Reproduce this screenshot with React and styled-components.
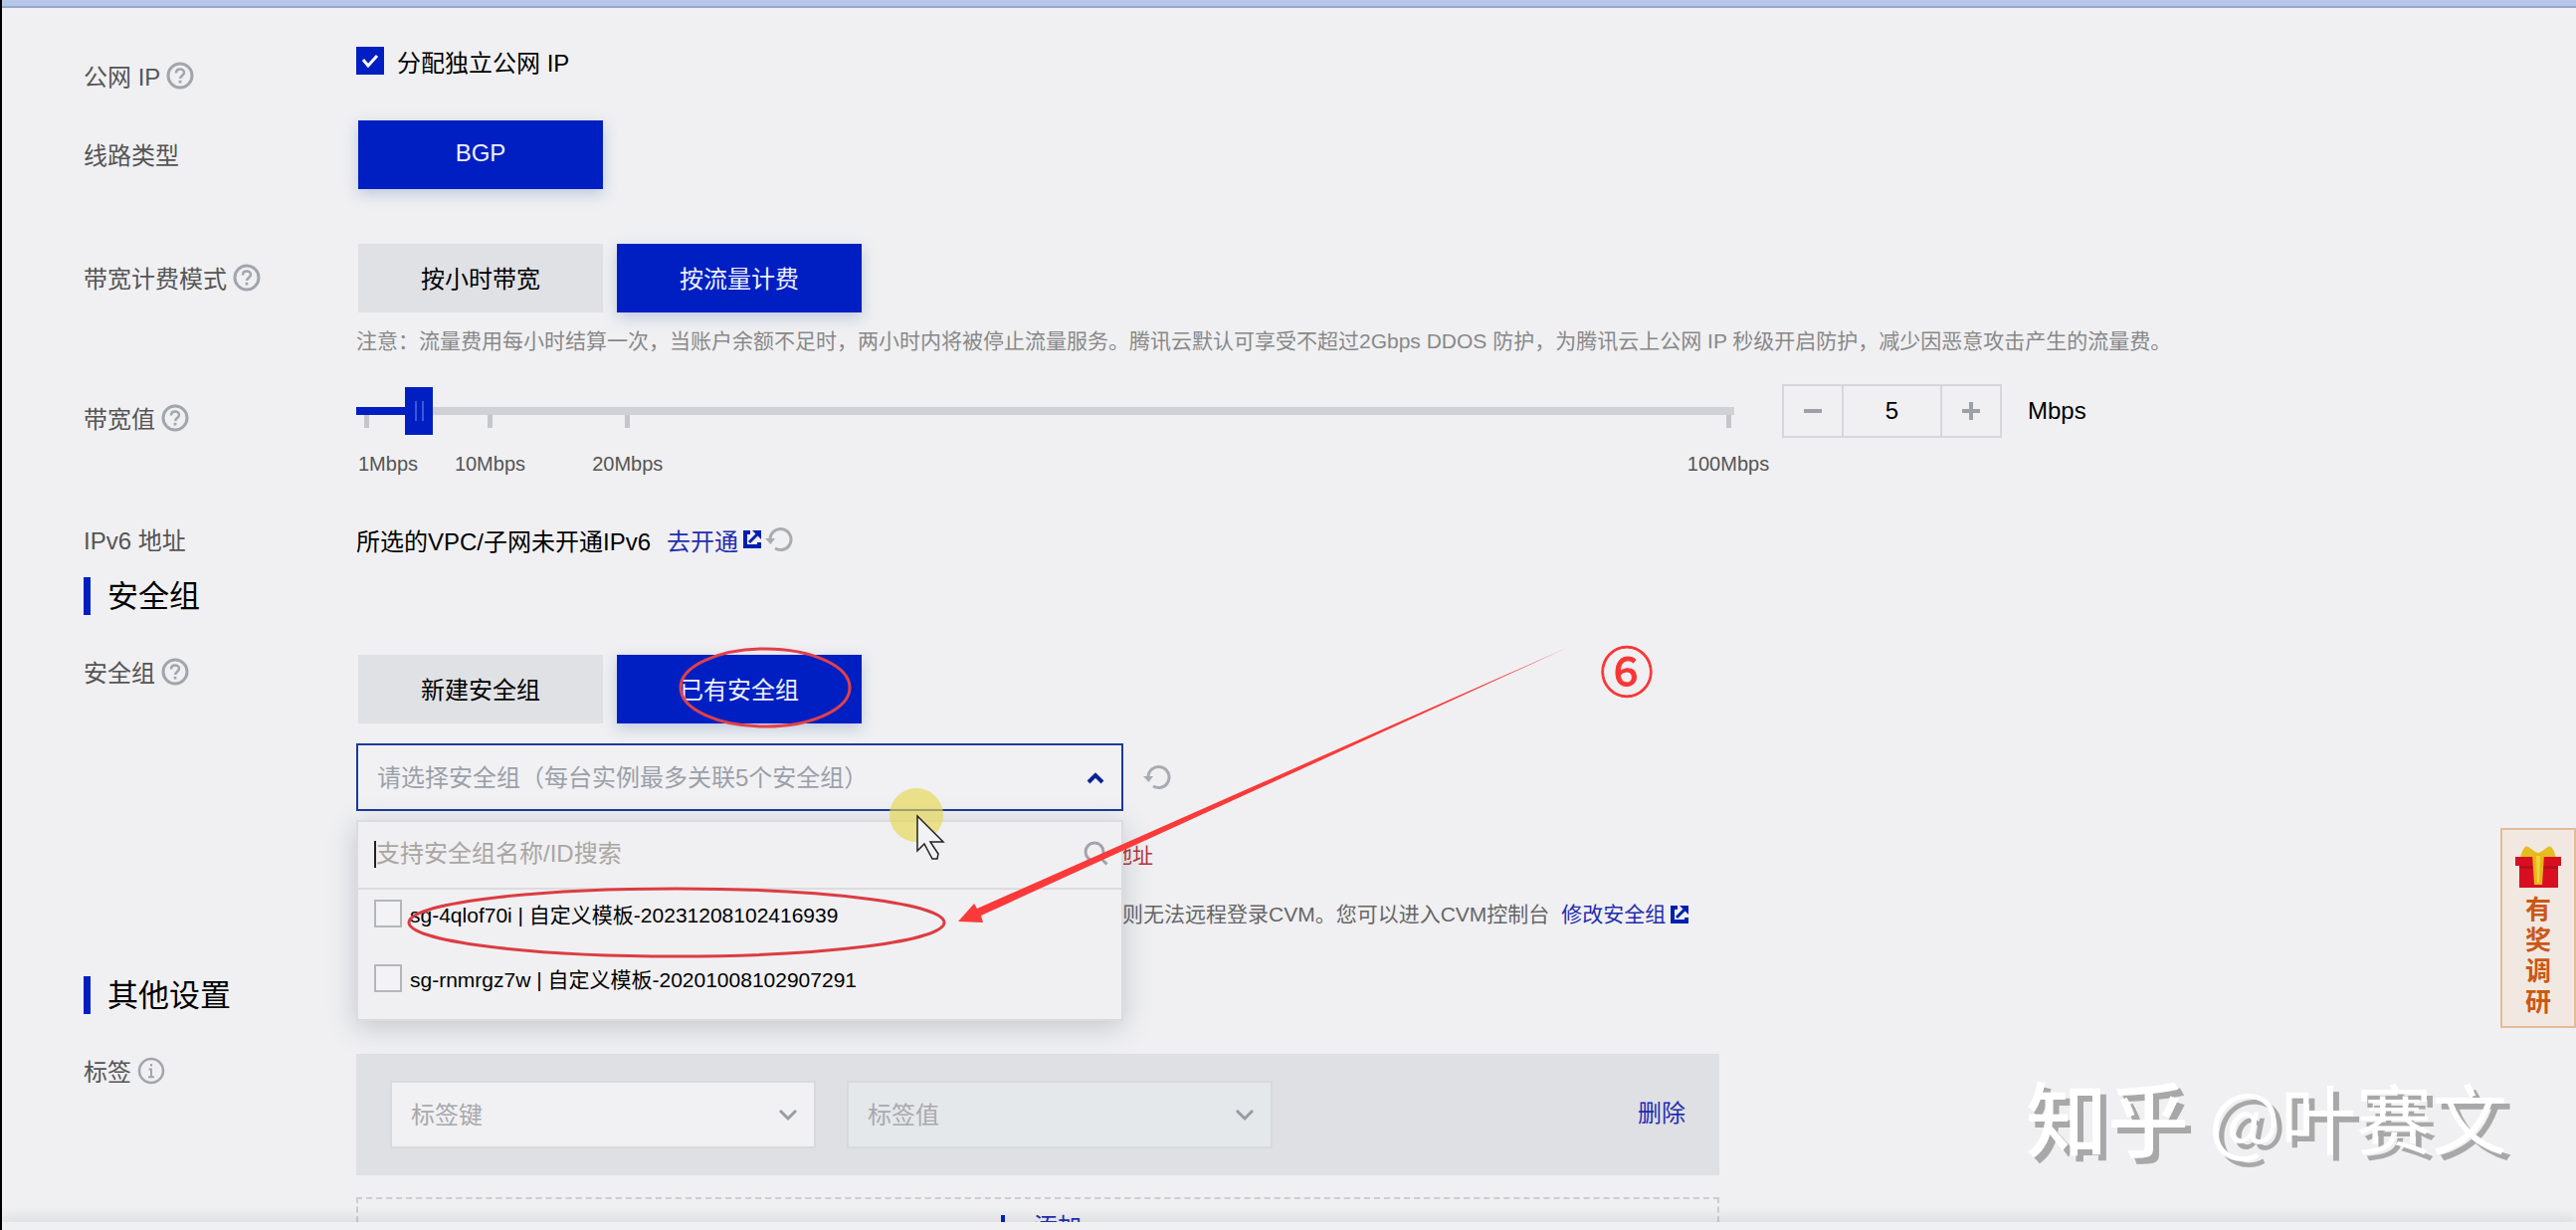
import React from "react";
import styled, { createGlobalStyle, css } from "styled-components";

const GlobalStyle = createGlobalStyle`
    * {
        box-sizing: border-box;
    }
    body {
        margin: 0;
        background-color: #f0f0f2;
        color: #000;
        font-family: "Liberation Sans", "Noto Sans CJK SC", sans-serif;
        font-size: 24px;
    }
    button, input, select {
        font: inherit;
        margin: 0;
    }
`;

const BLUE = "#001fc2";
const LINK = "#1f2db0";

const Page = styled.div`
    position: relative;
    display: flex;
    flex-direction: column;
    height: 100vh;
    overflow: hidden;
    border-left: 2px solid #000;
`;

const TopBar = styled.header`
    flex: none;
    height: 8px;
    background-color: #b5c6e6;
    border-bottom: 2px solid #98a6cf;
`;

const Content = styled.main`
    flex: 1;
    min-height: 0;
    overflow: hidden;
    padding: 34px 82px 0;
`;

const BottomBar = styled.footer`
    flex: none;
    z-index: 1;
    height: 8px;
    background-color: #f0f0f2;
    box-shadow: 0 -2px 14px rgba(60, 70, 80, 0.2);
`;

const Row = styled.div`
    display: grid;
    grid-template-columns: 274px minmax(0, 1fr);
    align-items: start;
    margin-top: ${props => props.gap || 0}px;
`;

const Label = styled.div`
    display: flex;
    align-items: center;
    gap: 6px;
    height: ${props => (props.compact ? 36 : 70)}px;
    padding-bottom: 3px;
    color: #555;
`;

const Field = styled.div`
    min-width: 0;
`;

const SectionTitle = styled.h2`
    display: flex;
    align-items: center;
    height: 38px;
    margin: ${props => props.gap}px 0 0;
    padding: 0 0 5px 17px;
    border-left: 7px solid ${BLUE};
    font-size: 31px;
    font-weight: 400;
`;

const CheckLabel = styled.label`
    display: flex;
    align-items: center;
    gap: 13px;
    height: 40px;
    padding-bottom: 2px;
`;

const Checkbox = styled.input`
    appearance: none;
    flex: none;
    width: 28px;
    height: 28px;
    border: 2px solid #b4b6ba;
    background-color: #f3f3f5;
    &:checked {
        border-color: ${BLUE};
        background: ${BLUE} url("data:image/svg+xml,%3Csvg xmlns='http://www.w3.org/2000/svg' viewBox='0 0 24 24'%3E%3Cpath d='M5 11l5 6 9-10' fill='none' stroke='white' stroke-width='3'/%3E%3C/svg%3E") center / 24px no-repeat;
    }
`;

const Choices = styled.div`
    display: flex;
    gap: 14px;
    padding-left: 2px;
`;

const Choice = styled.button`
    width: 246px;
    height: 69px;
    padding: 0 0 3px;
    border: 0;
    background-color: #e0e1e5;
    color: #000;
    ${props => props.$active && css`
        background-color: ${BLUE};
        color: #eef1ff;
        box-shadow: 0 5px 14px rgba(70, 110, 170, 0.3);
    `}
`;

const Note = styled.p`
    margin: 14px 0 0;
    font-size: 21px;
    line-height: 30px;
    color: #888;
    white-space: nowrap;
`;

const Bandwidth = styled.div`
    display: flex;
    align-items: flex-start;
`;

const Slider = styled.div`
    display: grid;
    flex: 0 1 1385px;
    height: 95px;
    & > * {
        grid-area: 1 / 1;
    }
`;

const Track = styled.div`
    height: 8px;
    margin-top: 23px;
    background: linear-gradient(to right, ${BLUE} 55px, #cfd1d6 55px);
`;

const Range = styled.input`
    appearance: none;
    z-index: 1;
    width: calc(100% + 12px);
    height: 48px;
    margin: 3px -6px 0;
    background: transparent;
    &::-webkit-slider-thumb {
        appearance: none;
        width: 28px;
        height: 48px;
        background:
            linear-gradient(#3a57dc, #3a57dc) 10px 14px / 2px 20px no-repeat,
            linear-gradient(#3a57dc, #3a57dc) 17px 14px / 2px 20px no-repeat,
            ${BLUE};
    }
`;

const Marks = styled.div`
    display: grid;
    grid-template-columns: 9fr 10fr 80fr 0;
    margin-top: 31px;
    padding: 0 6px 0 10px;
`;

const Mark = styled.div`
    display: flex;
    flex-direction: column;
    align-items: center;
    gap: 21px;
    width: 0;
    font-size: 20px;
    line-height: 30px;
    color: #555;
    white-space: nowrap;
    &::before {
        content: "";
        width: 5px;
        height: 13px;
        background-color: #c4c6cc;
    }
    &:first-child {
        align-items: flex-start;
        margin-left: -8px;
    }
    &:first-child::before {
        margin-left: 6px;
    }
`;

const Stepper = styled.div`
    display: flex;
    flex: none;
    margin: 0 26px 0 48px;
    border: 2px solid #d6d7da;
    height: 54px;
`;

const StepButton = styled.button`
    display: flex;
    align-items: center;
    justify-content: center;
    width: 58px;
    padding: 0;
    border: 0;
    background: none;
`;

const StepInput = styled.input`
    width: 101px;
    padding: 0;
    border: solid #d6d7da;
    border-width: 0 2px;
    background: none;
    text-align: center;
`;

const Unit = styled.span`
    line-height: 54px;
`;

const Inline = styled.div`
    display: flex;
    align-items: center;
    gap: ${props => props.gap || 0}px;
    min-height: ${props => props.minHeight || 0}px;
`;

const Link = styled.a`
    display: inline-flex;
    align-items: center;
    gap: 5px;
    margin-left: 12px;
    color: ${LINK};
    text-decoration: none;
`;

const IconButton = styled.button`
    display: flex;
    padding: 0;
    border: 0;
    background: none;
`;

const Picker = styled.div`
    position: relative;
    width: 771px;
`;

// native select with its own arrow laid over the right end
const SelectBox = styled.div`
    display: grid;
    width: ${props => props.width}px;
    align-items: center;
    & > * {
        grid-area: 1 / 1;
    }
    & > svg {
        justify-self: end;
        margin-right: 18px;
        pointer-events: none;
    }
`;

const Select = styled.select`
    appearance: none;
    width: 100%;
    height: 68px;
    padding: 0 19px;
    border: 2px solid ${props => (props.$open ? "#1b3a9c" : "#d8d9dc")};
    border-radius: 0;
    background-color: ${props => (props.disabled ? "#e4e8eb" : "#f1f1f3")};
    color: ${props => (props.$open ? "#9ba0aa" : "#a9a9ad")};
    opacity: 1;
`;

const Dropdown = styled.div`
    position: absolute;
    z-index: 2;
    top: 77px;
    left: 0;
    width: 100%;
    height: 202px;
    border: 2px solid #dcdcdf;
    background-color: #f0f0f2;
    box-shadow: 0 6px 26px rgba(60, 75, 90, 0.25);
`;

const SearchBar = styled.div`
    display: flex;
    align-items: center;
    height: 68px;
    padding: 0 12px 2px 16px;
    border-bottom: 2px solid #dcdcdf;
`;

const Caret = styled.span`
    width: 2px;
    height: 27px;
    background-color: #222;
`;

const SearchInput = styled.input`
    flex: 1;
    min-width: 0;
    padding: 0;
    border: 0;
    outline: 0;
    background: none;
    &::placeholder {
        color: #aaa6a3;
    }
`;

const Option = styled.label`
    display: flex;
    align-items: center;
    gap: 8px;
    height: 65px;
    padding: 0 0 18px 16px;
    font-size: 21px;
`;

const Help = styled.p`
    display: flex;
    align-items: center;
    margin: ${props => props.gap}px 0 0;
    padding-left: ${props => props.indent}px;
    font-size: 21px;
    line-height: 30px;
    color: ${props => (props.error ? "#b8323a" : "#666")};
    white-space: nowrap;
`;

const TagPanel = styled.div`
    display: flex;
    align-items: center;
    gap: 31px;
    max-width: 1370px;
    height: 122px;
    padding: 0 34px;
    background-color: #dfe0e4;
`;

const TextButton = styled.button`
    margin-left: auto;
    padding: 0 0 8px;
    border: 0;
    background: none;
    color: ${LINK};
`;

const AddButton = styled.button`
    display: flex;
    align-items: center;
    justify-content: center;
    gap: 22px;
    width: 100%;
    max-width: 1370px;
    height: 54px;
    margin-top: 22px;
    padding: 0;
    border: 2px dashed #cccdd1;
    background: none;
    color: ${LINK};
`;

const Survey = styled.a`
    position: absolute;
    z-index: 2;
    top: 832px;
    right: 0;
    display: flex;
    flex-direction: column;
    align-items: center;
    width: 76px;
    height: 201px;
    padding-top: 15px;
    border: 2px solid #e3bd97;
    background-color: #f1e8e2;
    color: #cb5716;
    font-size: 26px;
    font-weight: 700;
    line-height: 31px;
    text-decoration: none;
`;

const SurveyText = styled.span`
    width: 26px;
    margin-top: 6px;
    word-break: break-all;
`;

const Watermark = styled.div`
    position: absolute;
    z-index: 2;
    right: 69px;
    bottom: 60px;
    display: flex;
    gap: 20px;
    color: #fff;
    font-family: "Noto Sans CJK SC", sans-serif;
    font-size: 76px;
    line-height: 110px;
    text-shadow: 6px 6px 0 #a8a8a8;
`;

const WatermarkBrand = styled.span`
    font-size: 82px;
    font-weight: 500;
`;

const Annotations = styled.svg`
    position: absolute;
    z-index: 3;
    top: 0;
    left: -2px;
    pointer-events: none;
`;

const StepNumber = styled.span`
    position: absolute;
    z-index: 3;
    top: 643px;
    left: 1606px;
    color: #fa3535;
    font-family: "Noto Sans CJK SC", sans-serif;
    font-size: 54px;
    line-height: 60px;
    -webkit-text-stroke: 1px #fa3535;
`;

const HelpIcon = () => (
    <svg width="28" height="28" viewBox="0 0 28 28" fill="none" stroke="#a2a5ad" strokeWidth="3">
        <circle cx="14" cy="14" r="12" />
        <path d="M10 11.5c0-2.6 1.8-4 4-4s4 1.500 4 3.600c0 2.800-3.900 3-3.900 6" strokeWidth="2.500" />
        <path d="M14 18.800v2.700" strokeWidth="2.800" />
    </svg>
);

const InfoIcon = () => (
    <svg width="28" height="28" viewBox="0 0 28 28" fill="none" stroke="#a2a5ad" strokeWidth="2.500">
        <circle cx="14" cy="14" r="12" />
        <path d="M14 7v2.600M11.500 12.500H14V20M11 20.300h6" strokeWidth="2" />
    </svg>
);

const RefreshIcon = () => (
    <svg width="28" height="26" viewBox="0 0 28 26" fill="none">
        <path d="M5 13a10.500 10.500 0 1 1 5 9" stroke="#a9abb2" strokeWidth="3" />
        <path d="M0 12h10l-4.500 6z" fill="#a9abb2" />
    </svg>
);

const ExternalIcon = () => (
    <svg width="18" height="18" viewBox="0 0 18 18" fill="none" stroke="#001fb0" strokeWidth="4">
        <path d="M7 2H2v14h14v-4" />
        <path d="M6 12l8-8" strokeWidth="3" />
        <path d="M9 0h9v9z" fill="#001fb0" stroke="none" />
    </svg>
);

const Chevron = ({ up }) => (
    <svg width="20" height="14" viewBox="0 0 20 14" fill="none" stroke={up ? "#0b2499" : "#989ba2"} strokeWidth={up ? "4" : "3"}>
        <path d={up ? "M3 12l7-7 7 7" : "M2 3l8 8 8-8"} />
    </svg>
);

const SearchIcon = () => (
    <svg width="26" height="26" viewBox="0 0 26 26" fill="none" stroke="#a2a3ae" strokeWidth="3">
        <circle cx="11" cy="11" r="9" />
        <path d="M17.500 17.500l6 6" />
    </svg>
);

const SignIcon = ({ plus, color = "#9da0a8" }) => (
    <svg width="18" height="18" viewBox="0 0 18 18" stroke={color} strokeWidth="4">
        <path d={plus ? "M0 9h18M9 0v18" : "M0 9h18"} />
    </svg>
);

const GiftIcon = () => (
    <svg width="46" height="44" viewBox="0 0 46 44">
        <path d="M5 13C7 5 10 0 13 2c4 2 6 5 10 6 4-1 6-4 10-6 3-2 6 3 8 11z" fill="#e5bd20" />
        <path d="M0 12h46v9h-3v22H4V21H0z" fill="#d80f20" />
        <path d="M4 21h39v3H4z" fill="#b90d1e" />
        <path d="M17 9h12l-2 31h-8z" fill="#e9b51c" />
        <path d="M21 11h4l-1 27h-2z" fill="#f0d53b" />
    </svg>
);

const securityGroups = [
    "sg-4qlof70i | 自定义模板-20231208102416939",
    "sg-rnmrgz7w | 自定义模板-20201008102907291"
];

const App = () => (
    <>
        <GlobalStyle />
        <Page>
            <TopBar />
            <Content>
                <Row>
                    <Label>公网 IP <HelpIcon /></Label>
                    <Field>
                        <CheckLabel>
                            <Checkbox type="checkbox" defaultChecked />
                            分配独立公网 IP
                        </CheckLabel>
                    </Field>
                </Row>
                <Row gap={9}>
                    <Label>线路类型</Label>
                    <Choices>
                        <Choice $active>BGP</Choice>
                    </Choices>
                </Row>
                <Row gap={54}>
                    <Label>带宽计费模式 <HelpIcon /></Label>
                    <Field>
                        <Choices>
                            <Choice>按小时带宽</Choice>
                            <Choice $active>按流量计费</Choice>
                        </Choices>
                        <Note>注意：流量费用每小时结算一次，当账户余额不足时，两小时内将被停止流量服务。腾讯云默认可享受不超过2Gbps DDOS 防护，为腾讯云上公网 IP 秒级开启防护，减少因恶意攻击产生的流量费。</Note>
                    </Field>
                </Row>
                <Row gap={28}>
                    <Label>带宽值 <HelpIcon /></Label>
                    <Bandwidth>
                        <Slider>
                            <Track />
                            <Marks>
                                <Mark>1Mbps</Mark>
                                <Mark>10Mbps</Mark>
                                <Mark>20Mbps</Mark>
                                <Mark>100Mbps</Mark>
                            </Marks>
                            <Range type="range" min="1" max="100" defaultValue="5" aria-label="带宽值" />
                        </Slider>
                        <Stepper>
                            <StepButton><SignIcon /></StepButton>
                            <StepInput type="text" defaultValue="5" aria-label="带宽值" />
                            <StepButton><SignIcon plus /></StepButton>
                        </Stepper>
                        <Unit>Mbps</Unit>
                    </Bandwidth>
                </Row>
                <Row gap={27}>
                    <Label>IPv6 地址</Label>
                    <Inline gap={4} minHeight={68}>
                        <span>所选的VPC/子网未开通IPv6</span>
                        <Link href="#ipv6">去开通<ExternalIcon /></Link>
                        <IconButton><RefreshIcon /></IconButton>
                    </Inline>
                </Row>

                <SectionTitle gap={2}>安全组</SectionTitle>
                <Row gap={40}>
                    <Label compact>安全组 <HelpIcon /></Label>
                    <Field>
                        <Choices>
                            <Choice>新建安全组</Choice>
                            <Choice $active>已有安全组</Choice>
                        </Choices>
                        <Inline gap={20} minHeight={108}>
                            <Picker>
                                <SelectBox width={771}>
                                    <Select $open aria-label="安全组">
                                        <option>请选择安全组（每台实例最多关联5个安全组）</option>
                                    </Select>
                                    <Chevron up />
                                </SelectBox>
                                <Dropdown>
                                    <SearchBar>
                                        <Caret />
                                        <SearchInput placeholder="支持安全组名称/ID搜索" aria-label="搜索" />
                                        <SearchIcon />
                                    </SearchBar>
                                    {securityGroups.map(name => (
                                        <Option key={name}>
                                            <Checkbox type="checkbox" />
                                            {name}
                                        </Option>
                                    ))}
                                </Dropdown>
                            </Picker>
                            <IconButton><RefreshIcon /></IconButton>
                        </Inline>
                        <Help error indent={759} gap={10}>地址</Help>
                        <Help indent={770} gap={29}>
                            则无法远程登录CVM。您可以进入CVM控制台
                            <Link href="#security">修改安全组<ExternalIcon /></Link>
                        </Help>
                    </Field>
                </Row>

                <SectionTitle gap={47}>其他设置</SectionTitle>
                <Row gap={40}>
                    <Label compact>标签 <InfoIcon /></Label>
                    <Field>
                        <TagPanel>
                            <SelectBox width={428}>
                                <Select aria-label="标签键">
                                    <option>标签键</option>
                                </Select>
                                <Chevron />
                            </SelectBox>
                            <SelectBox width={428}>
                                <Select disabled aria-label="标签值">
                                    <option>标签值</option>
                                </Select>
                                <Chevron />
                            </SelectBox>
                            <TextButton>删除</TextButton>
                        </TagPanel>
                        <AddButton><SignIcon plus color={BLUE} />添加</AddButton>
                    </Field>
                </Row>
            </Content>
            <BottomBar />

            <Survey href="#survey">
                <GiftIcon />
                <SurveyText>有奖调研</SurveyText>
            </Survey>
            <Watermark>
                <WatermarkBrand>知乎</WatermarkBrand>
                <span>@叶赛文</span>
            </Watermark>
            <StepNumber>⑥</StepNumber>
            <Annotations width="1700" height="1100" fill="none">
                <circle cx="921" cy="819" r="27" fill="#e6d750" fillOpacity="0.65" />
                <path d="M922 820v35l7-7 8 15h5l1-5-8-12h13z" fill="#f2f2f4" stroke="#222" strokeWidth="1.500" />
                <ellipse cx="769" cy="691" rx="85" ry="39" stroke="#e0404a" strokeWidth="3" />
                <ellipse cx="680" cy="927" rx="269" ry="34" stroke="#dc3c42" strokeWidth="3" />
                <path d="M963 926l16-18 3 5 595-263-591 270 2 7z" fill="#fa3a3a" />
            </Annotations>
        </Page>
    </>
);

export default App;
